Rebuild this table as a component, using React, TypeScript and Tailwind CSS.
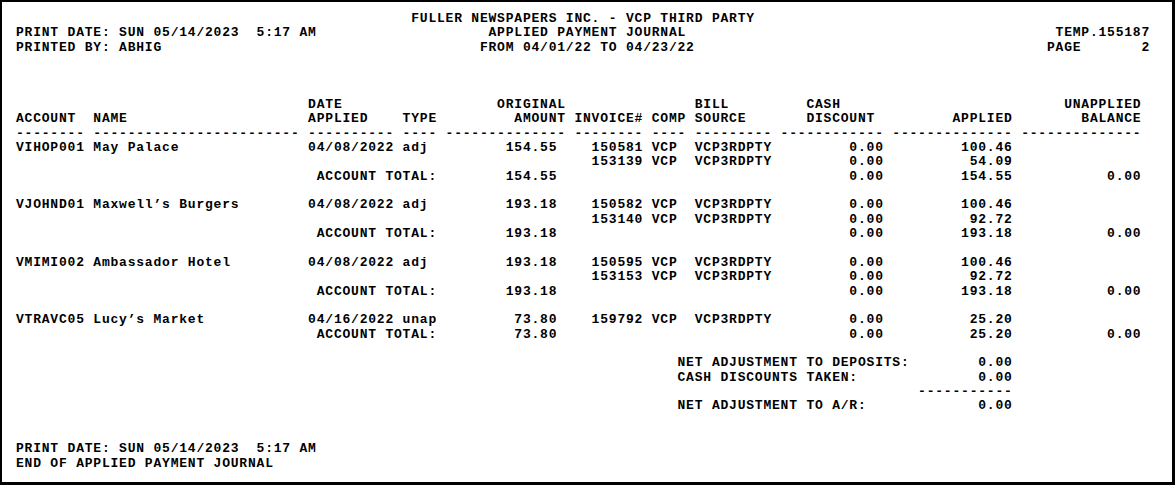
import React from 'react';

type Part = [number, string];

// place text pieces at fixed character columns, like the printed report
const at = (...parts: Part[]): string => {
  let s = '';
  for (const [col, text] of parts) s = s.padEnd(col, ' ') + text;
  return s;
};
// right-align text so its last char lands on column `end`
const R = (end: number, text: string): Part => [end - text.length + 1, text];
const dash = (n: number) => '-'.repeat(n);

type Entry = {
  account: string;
  name: string;
  date: string;
  type: string;
  amount: string;
  applied: string;
  lines: { invoice: string; applied: string }[];
};

const entries: Entry[] = [
  {
    account: 'VIHOP001',
    name: 'May Palace',
    date: '04/08/2022',
    type: 'adj',
    amount: '154.55',
    applied: '154.55',
    lines: [
      { invoice: '150581', applied: '100.46' },
      { invoice: '153139', applied: '54.09' },
    ],
  },
  {
    account: 'VJOHND01',
    name: 'Maxwell’s Burgers',
    date: '04/08/2022',
    type: 'adj',
    amount: '193.18',
    applied: '193.18',
    lines: [
      { invoice: '150582', applied: '100.46' },
      { invoice: '153140', applied: '92.72' },
    ],
  },
  {
    account: 'VMIMI002',
    name: 'Ambassador Hotel',
    date: '04/08/2022',
    type: 'adj',
    amount: '193.18',
    applied: '193.18',
    lines: [
      { invoice: '150595', applied: '100.46' },
      { invoice: '153153', applied: '92.72' },
    ],
  },
  {
    account: 'VTRAVC05',
    name: 'Lucy’s Market',
    date: '04/16/2022',
    type: 'unap',
    amount: '73.80',
    applied: '25.20',
    lines: [{ invoice: '159792', applied: '25.20' }],
  },
];

const buildReport = (): string[] => {
  const out: string[] = [];
  out.push(at([46, 'FULLER NEWSPAPERS INC. - VCP THIRD PARTY']));
  out.push(at([0, 'PRINT DATE: SUN 05/14/2023  5:17 AM'], [55, 'APPLIED PAYMENT JOURNAL'], [121, 'TEMP.155187']));
  out.push(at([0, 'PRINTED BY: ABHIG'], [54, 'FROM 04/01/22 TO 04/23/22'], [120, 'PAGE'], [131, '2']));
  out.push('', '', '');
  out.push(at([34, 'DATE'], [56, 'ORIGINAL'], [79, 'BILL'], [92, 'CASH'], [122, 'UNAPPLIED']));
  out.push(
    at(
      [0, 'ACCOUNT'], [9, 'NAME'], [34, 'APPLIED'], [45, 'TYPE'], [58, 'AMOUNT'], [65, 'INVOICE#'],
      [74, 'COMP'], [79, 'SOURCE'], [92, 'DISCOUNT'], [109, 'APPLIED'], [124, 'BALANCE'],
    ),
  );
  out.push(
    at(
      [0, dash(8)], [9, dash(24)], [34, dash(10)], [45, dash(4)], [50, dash(14)], [65, dash(8)],
      [74, dash(4)], [79, dash(9)], [89, dash(12)], [102, dash(14)], [117, dash(14)],
    ),
  );

  entries.forEach((e, i) => {
    e.lines.forEach((l, j) => {
      const head: Part[] =
        j === 0 ? [[0, e.account], [9, e.name], [34, e.date], [45, e.type], R(62, e.amount)] : [];
      out.push(at(...head, R(72, l.invoice), [74, 'VCP'], [79, 'VCP3RDPTY'], R(100, '0.00'), R(115, l.applied)));
    });
    out.push(at([35, 'ACCOUNT TOTAL:'], R(62, e.amount), R(100, '0.00'), R(115, e.applied), R(130, '0.00')));
    if (i < entries.length - 1) out.push('');
  });

  out.push('');
  out.push(at([77, 'NET ADJUSTMENT TO DEPOSITS:'], R(115, '0.00')));
  out.push(at([77, 'CASH DISCOUNTS TAKEN:'], R(115, '0.00')));
  out.push(at([105, dash(11)]));
  out.push(at([77, 'NET ADJUSTMENT TO A/R:'], R(115, '0.00')));
  out.push('', '');
  out.push('PRINT DATE: SUN 05/14/2023  5:17 AM');
  out.push('END OF APPLIED PAYMENT JOURNAL');
  return out;
};

const App: React.FC = () => {
  const report = buildReport();

  return (
    <div className="h-[485px] w-[1175px] bg-white border-t-2 border-l-2 border-r-[3px] border-b-[3px] border-black overflow-hidden">
      <pre className="pl-[14px] pt-[10px] font-['Liberation_Mono',monospace] font-bold text-[13px] tracking-[0.79px] leading-[14.35px] text-black whitespace-pre">
        {report.map((line, i) => (
          <div key={i} className="h-[14.35px]">
            {line}
          </div>
        ))}
      </pre>
    </div>
  );
};

export default App;
